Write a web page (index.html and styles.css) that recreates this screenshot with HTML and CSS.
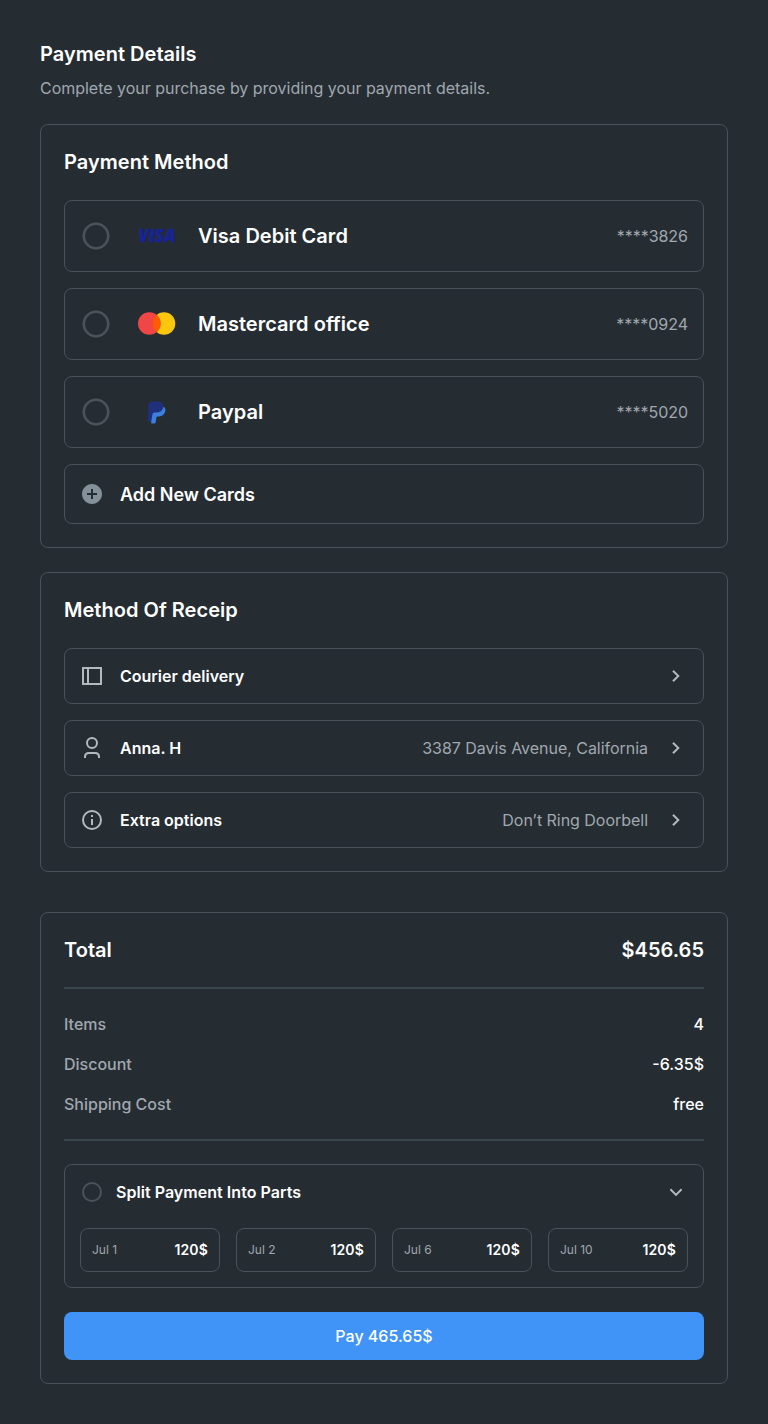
FILE: index.html
```html
<!DOCTYPE html>
<html lang="en">
<head>
<meta charset="utf-8">
<title>Payment Details</title>
<link rel="stylesheet" href="styles.css">
</head>
<body>
<main class="page">
  <header class="intro">
    <h1 class="title">Payment Details</h1>
    <p class="subtitle">Complete your purchase by providing your payment details.</p>
  </header>

  <section class="panel">
    <h2 class="title">Payment Method</h2>
    <div class="stack">
      <div class="row row-card">
        <svg class="radio-large" viewBox="0 0 28 28"><circle cx="14" cy="14" r="12.200"/></svg>
        <svg class="brand" viewBox="0 0 40 28"><text class="visa" x="0.500" y="20" textLength="37" lengthAdjust="spacingAndGlyphs">ViSA</text></svg>
        <span class="card-name">Visa Debit Card</span>
        <span class="muted">****3826</span>
      </div>
      <div class="row row-card">
        <svg class="radio-large" viewBox="0 0 28 28"><circle cx="14" cy="14" r="12.200"/></svg>
        <svg class="brand" viewBox="0 0 40 28"><circle cx="26" cy="13.500" r="11.300" fill="#fbc70d"/><circle cx="11.300" cy="13.500" r="11.300" fill="#f04646"/><path d="M18.650 4.920a11.300 11.300 0 0 1 0 17.160a11.300 11.300 0 0 1 0-17.160z" fill="#ff5a00"/></svg>
        <span class="card-name">Mastercard office</span>
        <span class="muted">****0924</span>
      </div>
      <div class="row row-card">
        <svg class="radio-large" viewBox="0 0 28 28"><circle cx="14" cy="14" r="12.200"/></svg>
        <svg class="brand" viewBox="0 0 40 28"><path d="M10.500 6q.4-2.600 3-2.600h6.200q6 0 5.600 5.600q-.8 5.800-7 5.800h-1.600q-1.800.2-2 1.800l-1 6.600h-2.800q-1.200 0-1.100-1z" fill="#20307c"/><path d="M25.400 8.800q2.500 1.200 1.900 4.200q-1.100 5.400-6.600 5.400h-1.200q-.9 0-1.100 1l-.8 5q-.2 1-1.200 1h-2.500q-1 0-.8-1l1.300-8q.4-1.800 2.200-1.800h2.200q5.600-.3 6.600-5.800z" fill="#3d7fe0"/></svg>
        <span class="card-name">Paypal</span>
        <span class="muted">****5020</span>
      </div>
      <div class="row row-add">
        <svg class="icon" viewBox="0 0 24 24" fill="#84919a"><path d="M12 22C6.477 22 2 17.523 2 12S6.477 2 12 2s10 4.477 10 10-4.477 10-10 10zm-1-11H7v2h4v4h2v-4h4v-2h-4V7h-2v4z"/></svg>
        <span class="add-name">Add New Cards</span>
      </div>
    </div>
  </section>

  <section class="panel">
    <h2 class="title">Method Of Receip</h2>
    <div class="stack">
      <div class="row row-option">
        <svg class="icon" viewBox="0 0 24 24"><path d="M3 4h18v16H3zM8 4v16"/></svg>
        <span class="strong">Courier delivery</span>
        <svg class="icon chevron" viewBox="0 0 24 24"><path d="M9 6.700l5.300 5.300-5.300 5.300"/></svg>
      </div>
      <div class="row row-option">
        <svg class="icon" viewBox="0 0 24 24"><circle cx="12" cy="7" r="5"/><path d="M5 22v-1q0-4 4-4h6q4 0 4 4v1"/></svg>
        <span class="strong">Anna. H</span>
        <span class="muted">3387 Davis Avenue, California</span>
        <svg class="icon chevron" viewBox="0 0 24 24"><path d="M9 6.700l5.300 5.300-5.300 5.300"/></svg>
      </div>
      <div class="row row-option">
        <svg class="icon" viewBox="0 0 24 24"><circle cx="12" cy="12" r="9"/><path d="M12 11v6M12 7v2"/></svg>
        <span class="strong">Extra options</span>
        <span class="muted">Don’t Ring Doorbell</span>
        <svg class="icon chevron" viewBox="0 0 24 24"><path d="M9 6.700l5.300 5.300-5.300 5.300"/></svg>
      </div>
    </div>
  </section>

  <section class="panel panel-total">
    <div class="total title"><span>Total</span><span>$456.65</span></div>
    <dl class="summary">
      <div class="line"><dt>Items</dt><dd>4</dd></div>
      <div class="line"><dt>Discount</dt><dd>-6.35$</dd></div>
      <div class="line"><dt>Shipping Cost</dt><dd>free</dd></div>
    </dl>
    <div class="split">
      <div class="split-head">
        <span class="radio"></span>
        <span class="strong">Split Payment Into Parts</span>
        <svg class="icon chevron" viewBox="0 0 24 24"><path d="M6.400 9.300l5.600 5.600 5.600-5.600"/></svg>
      </div>
      <div class="parts">
        <div class="part"><span class="date">Jul 1</span><span class="amount">120$</span></div>
        <div class="part"><span class="date">Jul 2</span><span class="amount">120$</span></div>
        <div class="part"><span class="date">Jul 6</span><span class="amount">120$</span></div>
        <div class="part"><span class="date">Jul 10</span><span class="amount">120$</span></div>
      </div>
    </div>
    <button class="pay" type="button">Pay 465.65$</button>
  </section>
</main>
</body>
</html>
```
FILE: styles.css
```css
* { box-sizing: border-box; }
body { margin: 0; background: #252c32; color: #fff; font-family: Inter, sans-serif; font-size: 16px; line-height: 24px; }
.page { display: flex; flex-direction: column; gap: 24px; padding: 38px 40px 40px; }
.title, .subtitle, .summary, dd { margin: 0; }
.title { font-size: 20px; line-height: 32px; font-weight: 600; letter-spacing: 0.03px; }
.intro { height: 62px; }
.subtitle { margin-top: 6px; color: #a0a8af; letter-spacing: -0.02px; }
.panel { border: 1px solid #48535b; border-radius: 8px; padding: 21px 23px 23px; }
.stack { display: flex; flex-direction: column; gap: 16px; margin-top: 22px; }
.row { display: flex; align-items: center; border: 1px solid #48535b; border-radius: 8px; padding: 0 15px; }
.row-card { height: 72px; }
.row-add { height: 60px; }
.row-option { height: 56px; }
.radio { width: 20px; height: 20px; margin-left: 2px; border: 2px solid #48535b; border-radius: 50%; flex: none; }
.radio-large { width: 28px; height: 28px; margin-left: 2px; flex: none; fill: none; stroke: #48535b; stroke-width: 2.6; }
.brand { width: 40px; height: 28px; margin: 0 20px 0 28px; }
.visa { font: italic 800 17px "Open Sans", sans-serif; fill: #172494; stroke: #172494; stroke-width: 0.5; }
.card-name { font-size: 20px; font-weight: 600; letter-spacing: 0.02px; }
.muted { margin-left: auto; color: #a0a8af; letter-spacing: -0.03px; }
.icon { width: 24px; height: 24px; flex: none; }
.icon:not([fill]) { fill: none; stroke: #b0babf; stroke-width: 2; }
.add-name { margin-left: 16px; padding-top: 1px; font-size: 18px; font-weight: 600; }
.strong { margin-left: 16px; font-weight: 600; }
.chevron { margin-left: auto; }
.muted + .chevron { margin-left: 16px; }
.panel-total { margin-top: 16px; }
.total { display: flex; justify-content: space-between; }
.summary { display: flex; flex-direction: column; gap: 16px; margin: 21px 0 23px; padding: 23px 0; border: solid #3a444b; border-width: 2px 0; }
.line { display: flex; justify-content: space-between; font-weight: 500; }
dt { color: #a0a8af; }
.split { height: 124px; border: 1px solid #48535b; border-radius: 8px; padding: 15px; }
.split-head { display: flex; align-items: center; height: 24px; }
.split-head .strong { margin-left: 14px; letter-spacing: 0.04px; }
.parts { display: grid; grid-template-columns: repeat(4, 1fr); gap: 16px; margin-top: 24px; }
.part { display: flex; align-items: center; justify-content: space-between; height: 44px; border: 1px solid #48535b; border-radius: 8px; padding: 0 11px; }
.date { font-size: 12px; color: #a0a8af; }
.amount { font-size: 14px; font-weight: 600; letter-spacing: 0.15px; }
.pay { display: block; width: 100%; height: 48px; margin-top: 24px; border: 0; border-radius: 8px; background: #4094f7; color: #fff; font: 500 16px/24px Inter, sans-serif; }
```
